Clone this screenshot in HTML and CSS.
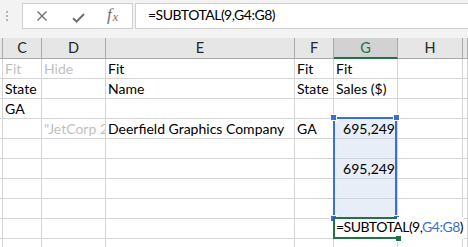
FILE: index.html
```html
<!DOCTYPE html>
<html>
<head>
<meta charset="utf-8">
<link rel="stylesheet" href="styles.css">
</head>
<body>
<div class="app">
  <div class="toolbar">
    <div class="grip"><i></i><i></i><i></i></div>
    <div class="btns">
      <svg class="ico" width="12" height="12" viewBox="0 0 12 12"><path d="M1.5 1.5 L10.5 10.5 M10.5 1.5 L1.5 10.5" stroke="#6e6e6e" stroke-width="1.4" fill="none"/></svg>
      <svg class="ico" width="13" height="10" viewBox="0 0 13 10"><path d="M1 5.2 L4.6 8.6 L12 1" stroke="#6e6e6e" stroke-width="2" fill="none"/></svg>
      <span class="fx">f<sub>x</sub></span>
    </div>
    <div class="fbar">=SUBTOTAL(9,G4:G8)</div>
  </div>
  <div class="sheet">
    <div class="h"></div><div class="h">C</div><div class="h">D</div><div class="h">E</div><div class="h">F</div><div class="h hs">G</div><div class="h">H</div><div class="h"></div>

    <div class="c"></div><div class="c g">Fit</div><div class="c g">Hide</div><div class="c">Fit</div><div class="c">Fit</div><div class="c">Fit</div><div class="c"></div><div class="c"></div>
    <div class="c"></div><div class="c">State</div><div class="c"></div><div class="c">Name</div><div class="c">State</div><div class="c">Sales ($)</div><div class="c"></div><div class="c"></div>
    <div class="c"></div><div class="c">GA</div><div class="c"></div><div class="c"></div><div class="c"></div><div class="c"></div><div class="c"></div><div class="c"></div>
    <div class="c"></div><div class="c"></div><div class="c g">"JetCorp 2020"</div><div class="c">Deerfield Graphics Company</div><div class="c">GA</div><div class="c sel r">695,249</div><div class="c"></div><div class="c"></div>
    <div class="c"></div><div class="c"></div><div class="c"></div><div class="c"></div><div class="c"></div><div class="c sel"></div><div class="c"></div><div class="c"></div>
    <div class="c"></div><div class="c"></div><div class="c"></div><div class="c"></div><div class="c"></div><div class="c sel r">695,249</div><div class="c"></div><div class="c"></div>
    <div class="c"></div><div class="c"></div><div class="c"></div><div class="c"></div><div class="c"></div><div class="c sel"></div><div class="c"></div><div class="c"></div>
    <div class="c"></div><div class="c"></div><div class="c"></div><div class="c"></div><div class="c"></div><div class="c sel"></div><div class="c"></div><div class="c"></div>
    <div class="c"></div><div class="c"></div><div class="c"></div><div class="c"></div><div class="c"></div><div class="c"></div><div class="c"></div><div class="c"></div>
    <div class="c"></div><div class="c"></div><div class="c"></div><div class="c"></div><div class="c"></div><div class="c"></div><div class="c"></div><div class="c"></div>
  </div>

  <div class="range">
    <span class="hd tl"></span><span class="hd tr"></span><span class="hd bl"></span><span class="hd br"></span>
  </div>
  <div class="edit">=SUBTOTAL(9,<span class="ref">G4:G8</span>)<span class="fill"></span></div>
</div>
</body>
</html>
```

FILE: styles.css
```css
* { box-sizing: border-box; }
html, body { margin: 0; padding: 0; }
body {
  width: 468px;
  height: 247px;
  overflow: hidden;
  background: #ffffff;
  font-family: Lato, "Liberation Sans", sans-serif;
  font-size: 14px;
  color: #000;
}
.app { position: relative; width: 468px; height: 247px; overflow: hidden; }

.toolbar {
  height: 38px;
  background: #f3f3f3;
  display: flex;
  align-items: flex-start;
  padding-top: 3px;
}
.grip {
  width: 22px;
  height: 26px;
  display: flex;
  flex-direction: column;
  align-items: center;
  justify-content: center;
  gap: 2px;
  padding-right: 8px;
}
.grip i { display: block; width: 2px; height: 2px; background: #b4b4b4; }
.btns {
  width: 111px;
  height: 26px;
  background: #fff;
  border: 1px solid #d0d0d0;
  display: flex;
  align-items: center;
  padding-left: 13px;
}
.ico { display: block; }
.btns .ico:first-child { margin-right: 24px; }
.btns .ico:nth-child(2) { margin-right: 22px; margin-top: 3px; }
.fx {
  font-family: "Liberation Serif", serif;
  font-style: italic;
  font-size: 17px;
  color: #6e6e6e;
  line-height: 1;
  margin-top: -3px;
}
.fx sub { font-size: 12px; vertical-align: -1px; margin-left: 1px; }
.fbar {
  flex: 1;
  height: 26px;
  margin-left: 2px;
  margin-right: -2px;
  background: #fff;
  border: 1px solid #d0d0d0;
  line-height: 22px;
  padding-left: 12px;
  font-size: 14px;
  letter-spacing: -0.5px;
}

.sheet {
  display: grid;
  grid-template-columns: 3px 39px 64px 189px 39px 64px 65px 5px;
  grid-template-rows: 21px repeat(10, 20px);
}
.h {
  background: #e6e6e6;
  border-right: 1px solid #ababab;
  border-bottom: 1px solid #ababab;
  text-align: center;
  line-height: 20px;
  font-size: 14.5px;
  color: #262626;
}
.h.hs {
  background: #d2d2d2;
  color: #217346;
  border-bottom: 2px solid #217346;
}
.c {
  border-right: 1px solid #d4d4d4;
  border-bottom: 1px solid #d4d4d4;
  line-height: 19px;
  padding-left: 2px;
  white-space: nowrap;
  overflow: hidden;
}
.c.g { color: #bfbfbf; }
.c.r { text-align: right; padding-right: 2px; }
.c.sel { background: #e8eef8; border-bottom-color: #cdd3dd; }

.range {
  position: absolute;
  left: 333px;
  top: 117px;
  width: 64px;
  height: 102px;
  border: 2px solid #3c6fd1;
}
.hd {
  position: absolute;
  width: 5px;
  height: 5px;
  background: #3c6fd1;
  border: 1px solid #fff;
  box-sizing: content-box;
}
.hd.tl { left: -5px; top: -5px; }
.hd.tr { right: -5px; top: -5px; }
.hd.bl { left: -5px; bottom: -5px; }
.hd.br { right: -5px; bottom: -5px; }

.edit {
  position: absolute;
  left: 333px;
  top: 217px;
  height: 22px;
  background: #fff;
  border-left: 2px solid #217346;
  padding: 2px 1px 0 1px;
  line-height: 16px;
  white-space: nowrap;
  font-size: 14px;
  letter-spacing: -0.5px;
}
.edit::before, .edit::after {
  content: "";
  position: absolute;
  left: -2px;
  width: 64px;
  height: 2px;
  background: #217346;
}
.edit::before { top: 0; }
.edit::after { bottom: 0; }
.ref { color: #3c6fd1; }
.fill {
  position: absolute;
  left: 60px;
  bottom: -3px;
  width: 5px;
  height: 5px;
  background: #217346;
  border: 1px solid #fff;
  box-sizing: content-box;
}
```
